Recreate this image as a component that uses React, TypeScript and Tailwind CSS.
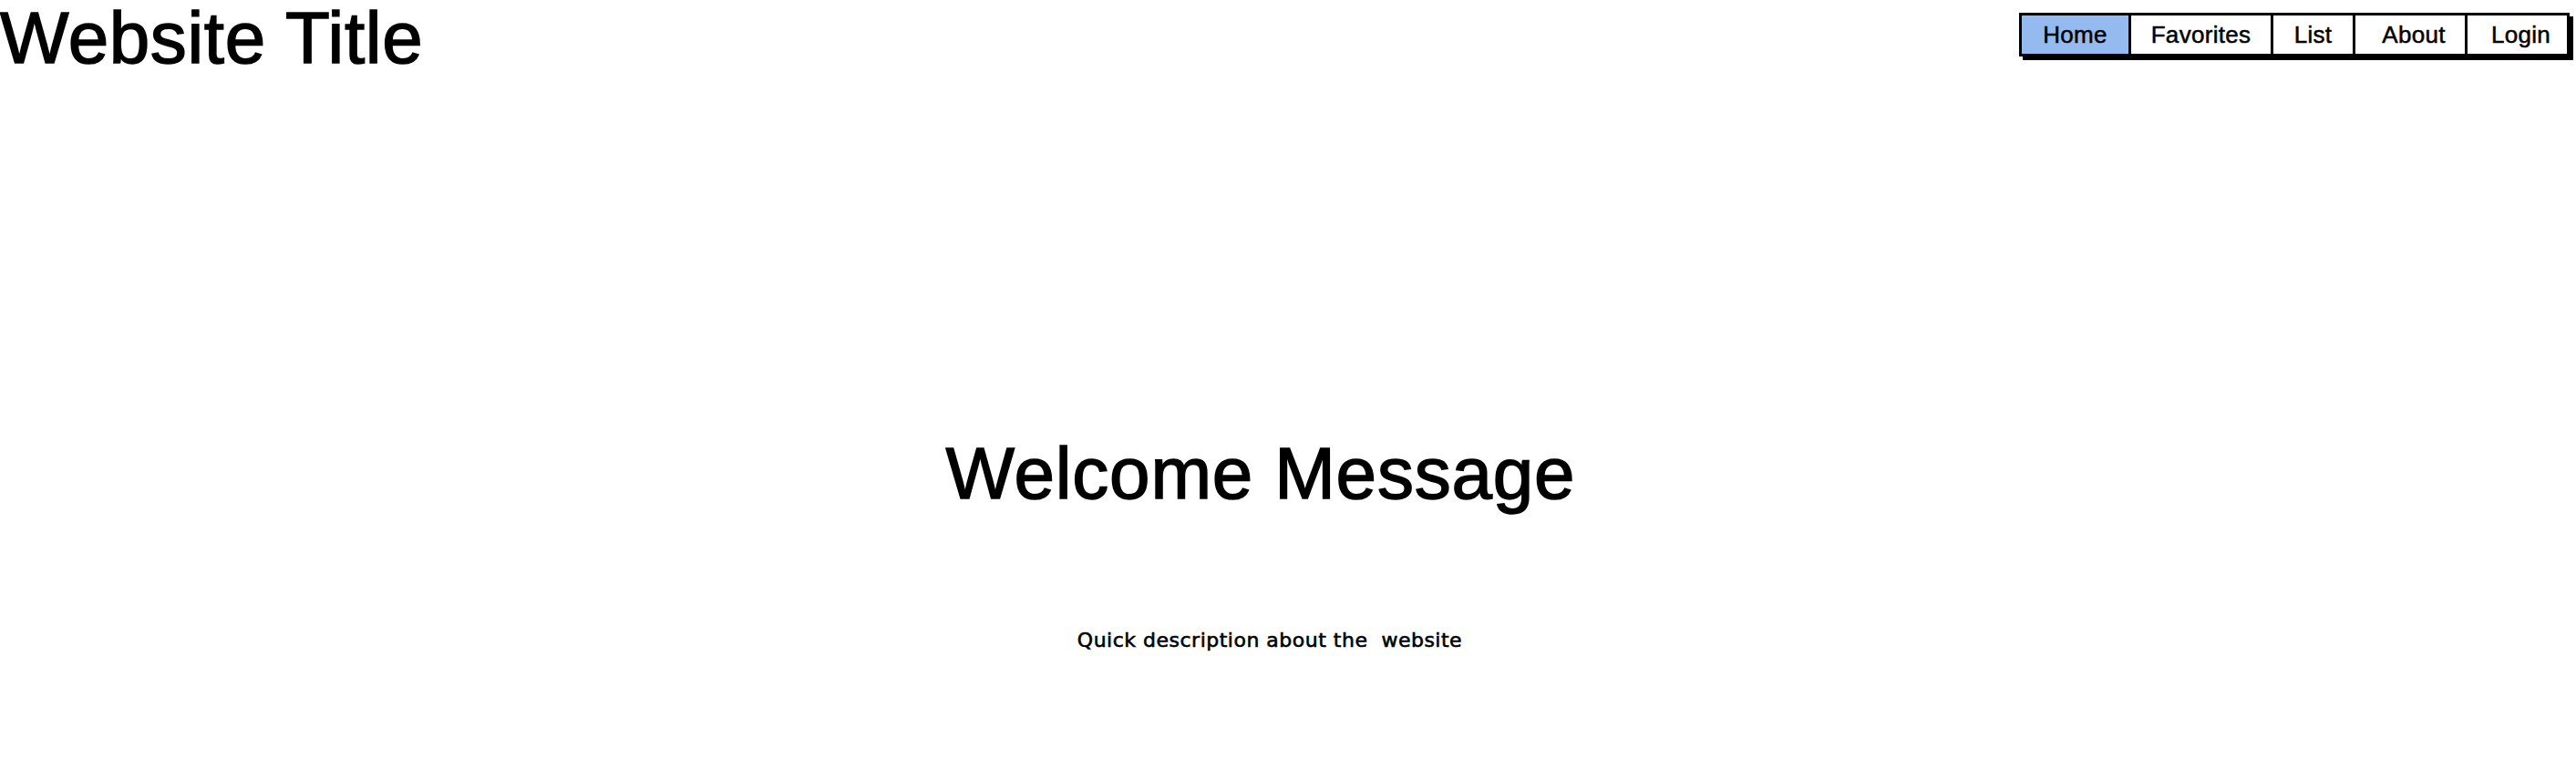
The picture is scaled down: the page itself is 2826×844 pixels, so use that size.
const navItems = [
  { label: 'Home', width: 'w-[117px]', active: true, extra: '' },
  { label: 'Favorites', width: 'w-[156px]', active: false, extra: '' },
  { label: 'List', width: 'w-[90px]', active: false, extra: '' },
  { label: 'About', width: 'w-[123px]', active: false, extra: 'pl-2' },
  { label: 'Login', width: 'w-[112px]', active: false, extra: 'pl-2' },
]

function Nav() {
  return (
    <nav className="mt-[12px] flex h-[48px] border-[3px] border-black bg-white shadow-[4px_4px_0_#000]">
      {navItems.map((item, i) => (
        <a
          key={item.label}
          href="#"
          className={`flex h-full items-center justify-center text-[26px] leading-none tracking-[0.3px] text-black [-webkit-text-stroke:0.5px_black] ${item.width} ${item.extra} ${
            i > 0 ? 'border-l-[3px] border-black' : ''
          } ${item.active ? 'bg-[#95baf0]' : 'bg-white'}`}
        >
          {item.label}
        </a>
      ))}
    </nav>
  )
}

export default function App() {
  return (
    <div className="min-h-[844px] w-full bg-white text-black font-['Liberation_Sans',Arial,sans-serif]">
      <header className="flex items-start justify-between pt-[2px] pr-[7px]">
        <h1 className="text-[80px] leading-none font-normal tracking-[0.6px] [-webkit-text-stroke:1.5px_black]">
          Website Title
        </h1>
        <Nav />
      </header>

      <main className="flex flex-col items-center pr-[60px]">
        <h2 className="mt-[398px] text-[80px] leading-none font-normal tracking-[0.8px] [-webkit-text-stroke:1.5px_black]">
          Welcome Message
        </h2>
        <p className="mt-[132px] ml-[20px] whitespace-pre font-['DejaVu_Sans',sans-serif] text-[22px] leading-none tracking-[0.5px] [-webkit-text-stroke:0.6px_black]">
          Quick description about the  website
        </p>
      </main>
    </div>
  )
}
